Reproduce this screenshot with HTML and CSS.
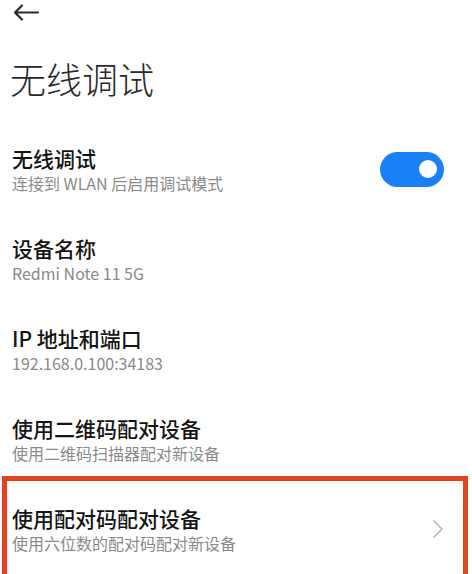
FILE: index.html
```html
<!DOCTYPE html>
<html lang="zh-CN">
<head>
<meta charset="utf-8">
<link rel="stylesheet" href="styles.css">
</head>
<body>
<div class="page">
  <div class="topbar">
    <svg class="back" width="28" height="24" viewBox="0 0 28 24">
      <path d="M26 12.5H3M10 5.5L3 12.5L10 19.5" fill="none" stroke="#2b2b2b" stroke-width="2.2" stroke-linecap="round" stroke-linejoin="round"/>
    </svg>
  </div>
  <h1 class="title">无线调试</h1>
  <div class="list">
    <div class="row">
      <div class="text">
        <div class="row-title">无线调试</div>
        <div class="row-sub">连接到 WLAN 后启用调试模式</div>
      </div>
      <div class="toggle"><div class="knob"></div></div>
    </div>
    <div class="row">
      <div class="text">
        <div class="row-title">设备名称</div>
        <div class="row-sub">Redmi Note 11 5G</div>
      </div>
    </div>
    <div class="row">
      <div class="text">
        <div class="row-title">IP 地址和端口</div>
        <div class="row-sub">192.168.0.100:34183</div>
      </div>
    </div>
    <div class="row">
      <div class="text">
        <div class="row-title">使用二维码配对设备</div>
        <div class="row-sub">使用二维码扫描器配对新设备</div>
      </div>
    </div>
    <div class="row highlighted">
      <div class="text">
        <div class="row-title">使用配对码配对设备</div>
        <div class="row-sub">使用六位数的配对码配对新设备</div>
      </div>
      <svg class="chevron" width="12" height="20" viewBox="0 0 12 20">
        <path d="M2 2L10 10L2 18" fill="none" stroke="#b4b4b4" stroke-width="1.6" stroke-linecap="round" stroke-linejoin="round"/>
      </svg>
    </div>
  </div>
</div>
</body>
</html>
```

FILE: styles.css
```css
html, body {
  margin: 0;
  padding: 0;
  background: #ffffff;
  overflow: hidden;
}
body {
  width: 472px;
  height: 574px;
  font-family: "Noto Sans CJK SC", "Noto Sans", sans-serif;
  color: #1a1a1a;
}
.page {
  height: 574px;
  overflow: hidden;
  padding: 0 28px 0 12px;
}
.topbar {
  height: 24px;
  display: flex;
  align-items: center;
}
.back {
  display: block;
}
.title {
  margin: 32px 0 0 -2px;
  font-size: 36px;
  line-height: 44px;
  font-weight: 300;
  color: #2a2a2a;
}
.list {
  margin-top: 24px;
}
.row {
  position: relative;
  display: flex;
  align-items: center;
  justify-content: space-between;
  padding: 20px 0;
  height: 50px;
}
.row-title {
  font-size: 21px;
  line-height: 28px;
  font-weight: 500;
  color: #141414;
}
.row-sub {
  font-size: 16px;
  line-height: 22px;
  color: #8a8a8a;
}
.toggle {
  width: 64px;
  height: 35px;
  border-radius: 18px;
  background: #1a80f6;
  display: flex;
  align-items: center;
  justify-content: flex-end;
  padding-right: 7px;
  box-sizing: border-box;
}
.knob {
  width: 18px;
  height: 18px;
  border-radius: 50%;
  background: #ffffff;
}
.chevron {
  display: block;
}
.highlighted::after {
  content: "";
  position: absolute;
  left: -10px;
  right: -24px;
  top: -8px;
  bottom: -20px;
  border: 5px solid #e5431f;
  pointer-events: none;
}
```
